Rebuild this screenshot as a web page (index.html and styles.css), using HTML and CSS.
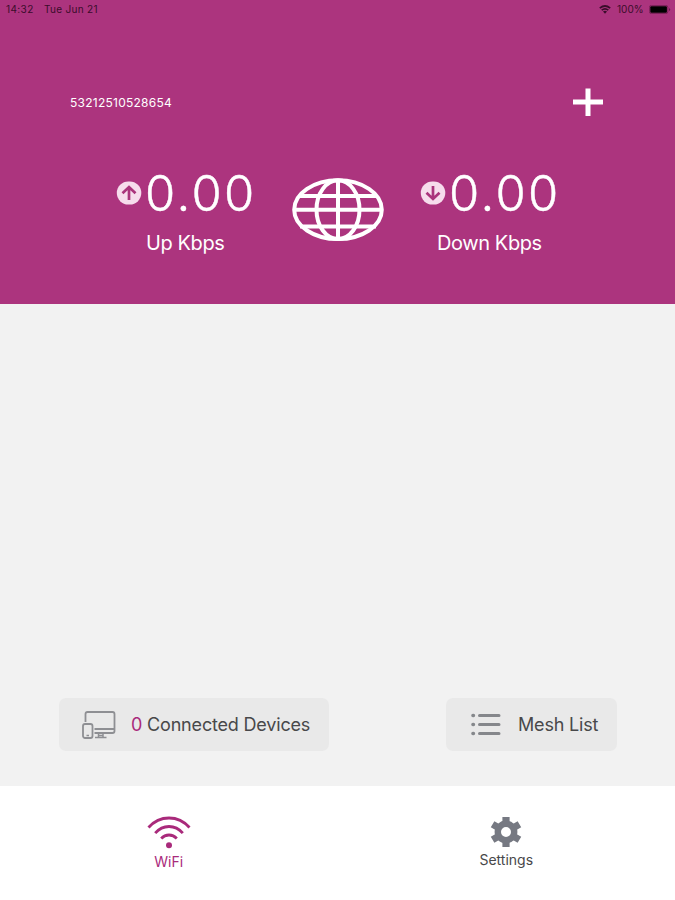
FILE: index.html
```
<!DOCTYPE html>
<html lang="en">
<head>
    <meta charset="UTF-8">
    <title>WiFi</title>
    <link rel="stylesheet" href="styles.css">
</head>
<body>
    <header class="header">
        <div class="status-bar">
            <span class="time">14:32</span>
            <span class="date">Tue Jun 21</span>
            <svg class="status-wifi" width="12" height="9" viewBox="0 0 12 9" fill="none" stroke="#3a0d2b" stroke-width="1.7">
                <path d="M.8 3.2Q6-1.2 11.2 3.2M2.7 5.2Q6 2.4 9.3 5.2"/>
                <path d="M4 6.5Q6 5 8 6.5L6 8.8Z" fill="#3a0d2b" stroke="none"/>
            </svg>
            <span class="percent">100%</span>
            <svg class="battery" width="22" height="9" viewBox="0 0 22 9">
                <rect x=".4" y=".4" width="18.4" height="8.2" rx="2" fill="none" stroke="#6d1d4f" stroke-width=".8"/>
                <rect x="1.3" y="1.3" width="16.6" height="6.4" rx="1"/>
                <path d="M20 3v3q1.2-.5 1.2-1.5T20 3Z" fill="#6d1d4f"/>
            </svg>
        </div>

        <div class="title-row">
            <span class="serial">53212510528654</span>
            <svg width="30" height="29" viewBox="0 0 30 29" fill="none" stroke="#fff" stroke-width="5">
                <path d="M0 14H30M15 .5V28"/>
            </svg>
        </div>

        <div class="speeds">
            <div class="speed">
                <div class="value">
                    <svg width="26" height="24" viewBox="0 0 26 24">
                        <rect x=".8" y=".5" width="24.5" height="23" rx="11.5" fill="#f6dcec"/>
                        <path d="M13 19V6M6.5 12.2L13 6L19.5 12.2" fill="none" stroke="#aa347c" stroke-width="2.7"/>
                    </svg>
                    <span class="number">0.00</span>
                </div>
                <div class="label up-label">Up Kbps</div>
            </div>
            <svg class="globe" width="92" height="64" viewBox="0 0 92 64" fill="none" stroke="#fff" stroke-width="4">
                <ellipse cx="46" cy="31.7" rx="43.8" ry="29.4"/>
                <ellipse cx="46" cy="31.7" rx="21.5" ry="29.4"/>
                <path d="M46 2V62M2 31.7H90M8 18H84M8 48.5H84"/>
            </svg>
            <div class="speed">
                <div class="value">
                    <svg width="26" height="24" viewBox="0 0 26 24">
                        <rect x=".8" y=".5" width="24.5" height="23" rx="11.5" fill="#f6dcec"/>
                        <path d="M13 5V18M6.5 11.8L13 18L19.5 11.8" fill="none" stroke="#aa347c" stroke-width="2.7"/>
                    </svg>
                    <span class="number">0.00</span>
                </div>
                <div class="label down-label">Down Kbps</div>
            </div>
        </div>
    </header>

    <main class="content">
        <div class="button devices">
            <svg width="34" height="28" viewBox="0 0 34 28" fill="none" stroke="#8e8f93" stroke-width="1.8">
                <path d="M3.5 11V3q0-2 2-2H30.5q2 0 2 2V20q0 2-2 2H12.5M12.5 18H32"/>
                <rect x="1" y="13" width="9.5" height="14" rx="2"/>
                <path d="M4.5 24.5H7M16.5 22V26.5M21 22V26.5M13 26.5H24.5M16.5 24.5H21" stroke-width="1.5"/>
            </svg>
            <span class="devices-text"><span class="count">0</span> Connected Devices</span>
        </div>
        <div class="button mesh">
            <svg width="30" height="24" viewBox="0 0 30 24" fill="none" stroke="#85878b" stroke-width="3" stroke-linecap="round">
                <path d="M8.5 2.5H28M8.5 11.5H28M8.5 20.5H28"/>
                <path d="M2 2.5h.4M2 11.5h.4M2 20.5h.4" stroke-width="3.6"/>
            </svg>
            <span class="mesh-text">Mesh List</span>
        </div>
    </main>

    <nav class="tabs">
        <div class="tab active">
            <svg width="44" height="34" viewBox="0 0 44 34" fill="none" stroke="#a92a7b" stroke-width="2.8">
                <path d="M1.5 12.5Q10 3 22 3T42.5 12.5M8.2 18.2Q14 11.5 22 11.5T35.8 18.2M14.2 23.5Q17.5 20 22 20T29.8 23.5"/>
                <circle cx="22" cy="30.3" r="3" fill="#a92a7b" stroke="none"/>
            </svg>
            <span>WiFi</span>
        </div>
        <div class="tab">
            <svg width="40" height="40" viewBox="-20 -20 40 40" fill="none" stroke="#767982">
                <circle r="8.2" stroke-width="6.4"/>
                <!-- three bars make six teeth, broken around the hole -->
                <g stroke-width="7.2">
                    <path d="M0-15V-9M0 9V15"/>
                    <path d="M0-15.5V-9M0 9V15.5" transform="rotate(60)"/>
                    <path d="M0-15.5V-9M0 9V15.5" transform="rotate(120)"/>
                </g>
            </svg>
            <span>Settings</span>
        </div>
    </nav>
</body>
</html>
```

FILE: styles.css
```
body {
    margin: 0;
    height: 900px;
    display: flex;
    flex-direction: column;
    background-color: #f2f2f2;
    font-family: Inter, "Liberation Sans", sans-serif;
    color: #48484a;
    white-space: nowrap;
}
svg { flex-shrink: 0; }

.header {
    height: 304px;
    background-color: #ac347e;
    color: white;
}

.status-bar {
    display: flex;
    align-items: center;
    height: 18px;
    padding: 0 4px 0 6px;
    color: #3a0d2b;
    font-size: 10px;
}
.time { width: 38px; letter-spacing: 0.4px; }
.date { letter-spacing: 0.3px; }
.status-wifi { margin-left: auto; }
.percent { margin-left: 6px; width: 27px; }
.battery { margin-left: 5px; }

.title-row {
    display: flex;
    align-items: center;
    justify-content: space-between;
    height: 29px;
    padding: 70px 72px 0 70px;
}
.serial { font-size: 12px; letter-spacing: 0.25px; }

.speeds {
    display: flex;
    justify-content: space-between;
    padding: 51px 115px 0 116px;
}
.speed { width: 140px; }
.value {
    display: flex;
    align-items: center;
    height: 50px;
}
.number {
    margin-left: 3px;
    font-size: 49px;
    font-weight: 300;
    line-height: 50px;
    letter-spacing: 2.4px;
    padding-top: 2px;
    -webkit-text-stroke: 0.4px white;
}
.label {
    margin-top: 13px;
    font-size: 20px;
    line-height: 24px;
    letter-spacing: -0.4px;
}
.up-label { padding-left: 30px; }
.down-label { padding-left: 17px; }
.globe { margin-top: 10px; }

.content {
    flex: 1;
    display: flex;
    align-items: flex-end;
    justify-content: space-between;
    padding: 0 58px 35px 59px;
}
.button {
    display: flex;
    align-items: center;
    box-sizing: border-box;
    height: 53px;
    border-radius: 7px;
    background-color: #e9e9e9;
    font-size: 18px;
    letter-spacing: -0.18px;
}
.devices { width: 270px; padding-left: 23px; }
.devices-text { margin-left: 15px; }
.count { color: #a92a7b; }
.mesh { width: 171px; padding-left: 25px; }
.mesh-text { margin-left: 17px; }

.tabs {
    display: flex;
    height: 114px;
    background-color: white;
}
.tab {
    flex: 1;
    display: flex;
    flex-direction: column;
    align-items: center;
    padding-top: 26px;
    font-size: 14px;
    line-height: 16px;
}
.active { padding-top: 29px; color: #a92a7b; }
.active span { margin-top: 5px; }
```
